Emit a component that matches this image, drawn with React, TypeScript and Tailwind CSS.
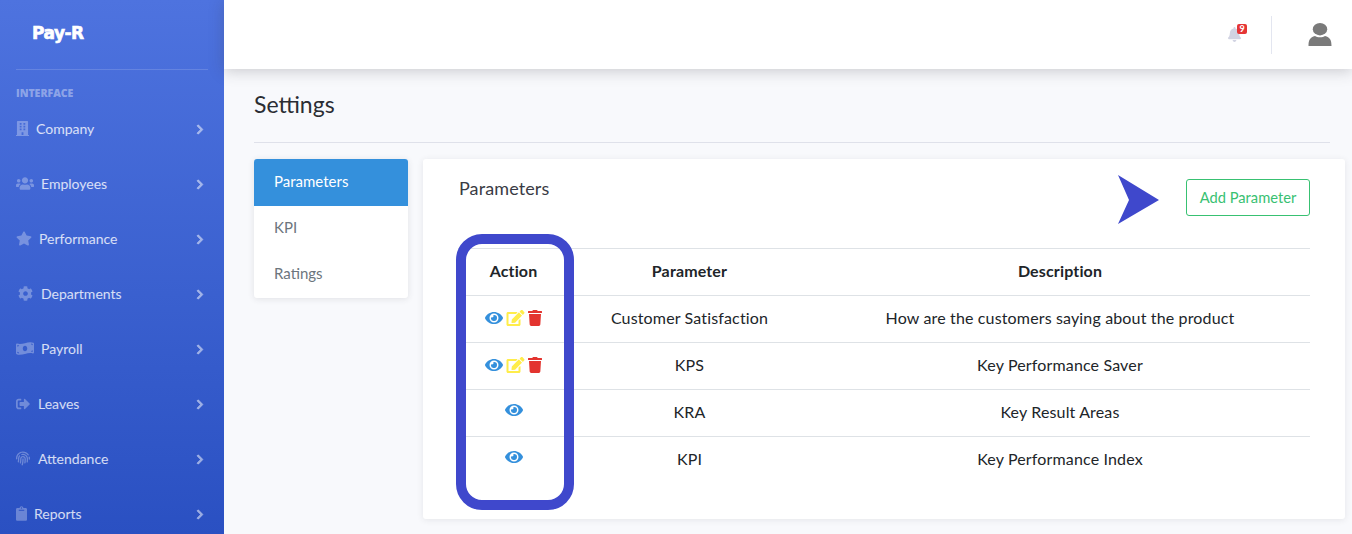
import {
  FaBell,
  FaBuilding,
  FaChevronRight,
  FaClipboard,
  FaCog,
  FaEdit,
  FaEye,
  FaFingerprint,
  FaMoneyBillWave,
  FaSignOutAlt,
  FaStar,
  FaTrash,
  FaUsers,
} from "react-icons/fa";

const menu = [
  { label: "Company", icon: <FaBuilding className="w-[13px] h-[17px]" />, labelClass: "ml-[7px]" },
  { label: "Employees", icon: <FaUsers className="w-[18px] h-[15px]" />, labelClass: "ml-[7px]" },
  { label: "Performance", icon: <FaStar className="w-[16px] h-[15px]" />, labelClass: "ml-[7px]" },
  { label: "Departments", icon: <FaCog className="w-[15px] h-[15px] ml-[2px]" />, labelClass: "ml-[8px]" },
  { label: "Payroll", icon: <FaMoneyBillWave className="w-[18px] h-[15px]" />, labelClass: "ml-[7px]" },
  { label: "Leaves", icon: <FaSignOutAlt className="w-[14px] h-[14px]" />, labelClass: "ml-[8px]" },
  { label: "Attendance", icon: <FaFingerprint className="w-[14px] h-[15px]" />, labelClass: "ml-[8px]" },
  { label: "Reports", icon: <FaClipboard className="w-[11px] h-[15px]" />, labelClass: "ml-[7px]" },
];

const rows = [
  { name: "Customer Satisfaction", desc: "How are the customers saying about the product", full: true },
  { name: "KPS", desc: "Key Performance Saver", full: true },
  { name: "KRA", desc: "Key Result Areas", full: false },
  { name: "KPI", desc: "Key Performance Index", full: false },
];

const UserIcon = () => (
  <svg className="mr-[20px]" width="24" height="23" viewBox="0 0 24 23" fill="#7a7a7a">
    <ellipse cx="12" cy="6.2" rx="7.2" ry="6.2" />
    <path d="M0.5 23 C0.5 17 2 14.5 7 13 C9 14.8 15 14.8 17 13 C22 14.5 23.5 17 23.5 23 Z" />
  </svg>
);

const App = () => {
  return (
    <div className="flex h-[534px] w-[1352px] overflow-hidden bg-[#f8f9fc] font-['Lato','Open_Sans',sans-serif] text-[#212529] relative">
      <aside className="w-[224px] shrink-0 h-full bg-gradient-to-b from-[#4e73df] to-[#2a50c2] px-4">
        <div className="h-[70px] border-b border-white/15 pl-4 pt-[22px]">
          <span className="block text-white font-['DejaVu_Sans',sans-serif] font-bold text-[17px] leading-[22px] tracking-[-0.5px] [-webkit-text-stroke:0.6px_white]">
            Pay-R
          </span>
        </div>
        <div className="mt-[17px] text-[10.5px] leading-[13px] font-extrabold text-white/40 font-['Open_Sans',sans-serif]">
          INTERFACE
        </div>
        <nav className="mt-[1px]">
          {menu.map((item) => (
            <div key={item.label} className="h-[55px] flex items-center text-white/80">
              <span className="text-white/30 flex items-center">{item.icon}</span>
              <span className={`${item.labelClass} text-[14px]`}>{item.label}</span>
              <FaChevronRight className="ml-auto mr-[4px] mt-[1px] w-[8px] h-[11px] text-white/50 [stroke-width:30]" />
            </div>
          ))}
        </nav>
      </aside>

      <div className="flex-1 min-w-0">
        <header className="h-[69px] bg-white shadow-[0_2px_14px_rgba(58,59,69,0.25)] flex items-center justify-end relative">
          <div className="relative mr-[30px]">
            <FaBell className="w-[13px] h-[15px] text-[#d1d3e2]" />
            <span className="absolute -top-[3px] left-[9px] w-[10px] h-[10px] bg-[#e53535] rounded-[2px] text-white text-[9px] leading-[10px] font-bold text-center">
              9
            </span>
          </div>
          <div className="w-px h-[38px] bg-[#e3e6f0] mr-[36px]" />
          <UserIcon />
        </header>

        <main className="pl-[30px] pr-[7px]">
          <div className="mr-[15px] h-[74px] border-b border-[#dfe1ea] pt-[21px]">
            <h1 className="text-[23px] leading-[28px] text-[#2b2d33]">Settings</h1>
          </div>

          <div className="flex items-start gap-[15px] mt-[16px]">
            <div className="w-[154px] h-[139px] bg-white rounded-[3px] shadow-[0_1px_6px_rgba(58,59,69,0.12)] overflow-hidden text-[15px]">
              <div className="h-[47px] pl-5 pb-[2px] flex items-center bg-[#3490dc] text-white">Parameters</div>
              <div className="h-[46px] pl-5 pb-[3px] flex items-center text-[#6c757d]">KPI</div>
              <div className="h-[46px] pl-5 pb-[3px] flex items-center text-[#6c757d]">Ratings</div>
            </div>

            <section className="flex-1 h-[360px] bg-white rounded-[3px] shadow-[0_1px_6px_rgba(58,59,69,0.1)] pl-[35px] pr-[35px] pt-[20px]">
              <div className="flex items-start justify-between h-[69px]">
                <h2 className="-mt-[1px] ml-[1px] text-[18px] leading-[20px] tracking-[0.1px] text-[#3a3b45]">Parameters</h2>
                <button className="w-[124px] h-[37px] pb-[1px] border border-[#38c172] rounded-[3px] text-[#38c172] text-[14.7px]">
                  Add Parameter
                </button>
              </div>
              <table className="w-[852px] table-fixed text-[16px] tracking-[0.15px] text-[#212529]">
                <thead>
                  <tr className="h-[47px] border-y border-[#dee2e6]">
                    <th className="w-[111px] font-bold pb-[2px]">Action</th>
                    <th className="w-[241px] font-bold pb-[2px]">Parameter</th>
                    <th className="font-bold pb-[2px]">Description</th>
                  </tr>
                </thead>
                <tbody>
                  {rows.map((row, i) => (
                    <tr key={row.name} className={i < 3 ? "h-[47px] border-b border-[#dee2e6]" : "h-[47px]"}>
                      <td>
                        <div className={row.full ? "flex items-center justify-center gap-[3px] -mt-[3px]" : "flex items-center justify-center gap-[3px] -mt-[7px]"}>
                          <FaEye className="w-[18px] h-[16px] text-[#3490dc]" />
                          {row.full && <FaEdit className="w-[19px] h-[16px] text-[#ffed4a]" />}
                          {row.full && <FaTrash className="w-[14px] h-[16px] text-[#e3342f]" />}
                        </div>
                      </td>
                      <td className="text-center pb-[2px]">{row.name}</td>
                      <td className="text-center pb-[2px]">{row.desc}</td>
                    </tr>
                  ))}
                </tbody>
              </table>
            </section>
          </div>
        </main>
      </div>

      {/* annotations drawn on top of the screenshot */}
      <div className="absolute left-[456px] top-[234px] w-[118px] h-[276px] border-[10px] border-[#3f48cc] rounded-[26px]" />
      <svg className="absolute left-[1118px] top-[175px]" width="41" height="49" viewBox="0 0 41 49">
        <path d="M0 0 L41 25 L0 49 L11 25 Z" fill="#3f48cc" />
      </svg>
    </div>
  );
};

export default App;
